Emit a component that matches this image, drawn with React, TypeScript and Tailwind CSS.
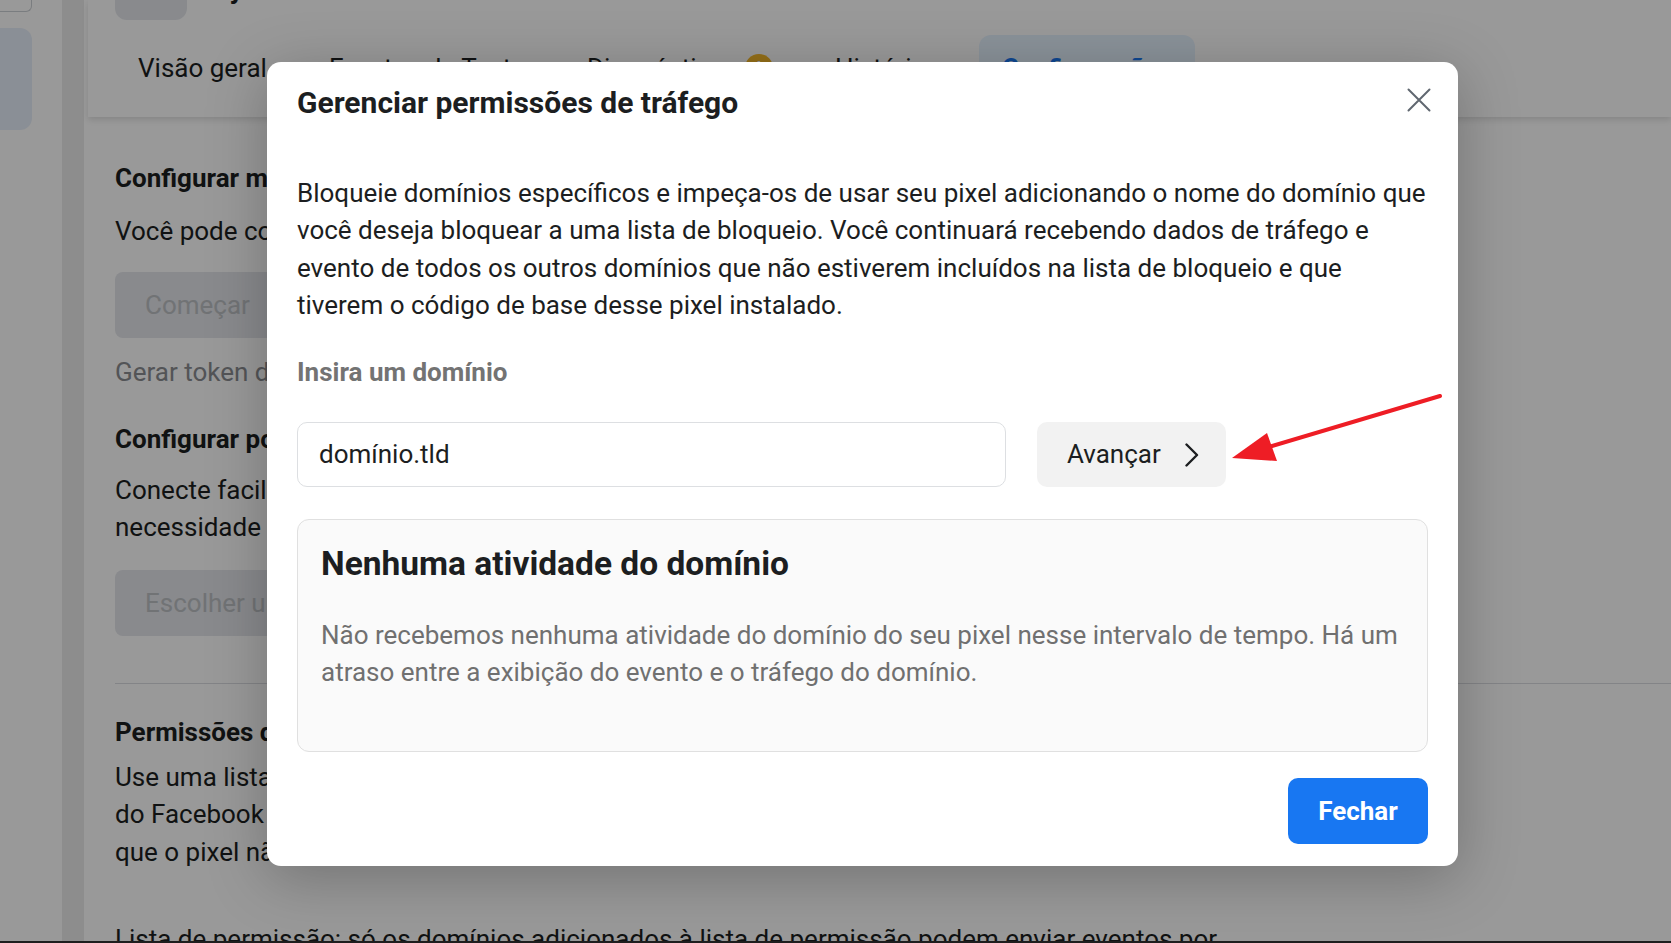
const tabs = [
  { label: "Visão geral" },
  { label: "Eventos de Teste" },
  { label: "Diagnóstico", badge: true },
  { label: "Histórico" },
  { label: "Configurações", active: true },
];

function Page() {
  return (
    <div className="flex h-full w-full">
      {/* left rail */}
      <div className="w-[62px] bg-white">
        <div className="h-[12px] w-[32px] rounded-br-md border-r border-b border-[#ccd0d5]" />
        <div className="mt-[16px] h-[102px] w-[32px] rounded-r-xl bg-[#e7effa]" />
      </div>
      <div className="w-[22px] bg-[#ebebeb]" />

      <div className="flex min-w-0 flex-1 flex-col bg-white pl-[4px]">
        {/* header with tabs */}
        <div className="flex h-[117px] shrink-0 flex-col bg-white shadow-[0_3px_6px_rgba(0,0,0,0.12)]">
          <div className="-mt-[30px] flex h-[50px] items-end pl-[27px]">
            <div className="h-[50px] w-[72px] rounded-xl bg-[#e4e6eb]" />
            <span className="mb-[17px] ml-[18px] text-[28px] leading-none font-bold text-[#1c1e21]">My Pixel</span>
          </div>
          <div className="mt-[15px] flex items-center gap-[16px] pl-[27px]">
            {tabs.map((t) => (
              <div
                key={t.label}
                className={
                  t.active
                    ? "flex h-[66px] items-center rounded-xl bg-[#e7f3ff] px-[23px] text-[26px] font-bold text-[#1877f2]"
                    : "flex h-[66px] items-center px-[23px] text-[26px] text-[#1c1e21]"
                }
              >
                {t.label}
                {t.badge && (
                  <span className="ml-[20px] flex h-[28px] w-[28px] items-center justify-center rounded-full bg-[#f7b928] text-[16px] font-bold text-white">
                    !
                  </span>
                )}
              </div>
            ))}
          </div>
        </div>

        {/* settings content */}
        <div className="pt-[45px] pl-[27px] text-[26px] text-[#1c1e21]">
          <h3 className="leading-[32px] font-bold">Configurar manualmente a API de Conversões</h3>
          <p className="mt-[21px] leading-[32px]">Você pode configurar a API de Conversões por conta própria.</p>
          <button className="mt-[25px] flex h-[66px] items-center rounded-lg bg-[#e4e6eb] px-[30px] text-[#bcc0c4]">
            Começar
          </button>
          <p className="mt-[18px] leading-[32px] text-[#8a8d91]">Gerar token de acesso</p>

          <h3 className="mt-[35px] leading-[32px] font-bold">Configurar por meio de um parceiro</h3>
          <p className="mt-[17px] leading-[37px]">
            Conecte facilmente seu site à API de Conversões usando um parceiro, sem a
            <br />
            necessidade de um desenvolvedor.
          </p>
          <button className="mt-[24px] flex h-[66px] items-center rounded-lg bg-[#e4e6eb] px-[30px] text-[#bcc0c4]">
            Escolher um parceiro
          </button>

          <div className="mt-[47px] h-px bg-[#dadde1]" />

          <h3 className="mt-[32px] leading-[32px] font-bold">Permissões de tráfego</h3>
          <p className="mt-[11px] leading-[37.3px]">
            Use uma lista de permissão ou de bloqueio para controlar quais domínios
            <br />
            do Facebook podem receber eventos do seu pixel. Os domínios bloqueados
            <br />
            que o pixel não reconhece.
          </p>
          <p className="mt-[50px] leading-[37px]">
            Lista de permissão: só os domínios adicionados à lista de permissão podem enviar eventos por
          </p>
        </div>
      </div>
    </div>
  );
}

function RedArrow() {
  return (
    <svg
      className="absolute top-[387px] left-[1225px]"
      width="225"
      height="80"
      viewBox="0 0 225 80"
      fill="none"
    >
      <line x1="215" y1="9" x2="44" y2="60" stroke="#ee1d25" strokeWidth="4" strokeLinecap="round" />
      <polygon points="7,71 42,46 52,74" fill="#ee1d25" />
    </svg>
  );
}

export default function App() {
  return (
    <div className="relative h-[943px] w-[1671px] overflow-hidden bg-white font-['Roboto',sans-serif]">
      <Page />

      <div className="absolute inset-0 bg-black/40" />

      {/* modal */}
      <div className="absolute top-[62px] left-[267px] w-[1191px] rounded-[14px] bg-white px-[30px] pt-[25px] pb-[22px] shadow-[0_12px_60px_rgba(0,0,0,0.25)]">
        <div className="flex items-center justify-between">
          <h2 className="text-[30px] leading-[32px] font-bold text-[#1c1e21]">Gerenciar permissões de tráfego</h2>
          <button className="-mt-[6px] -mr-[3px]">
            <svg width="24" height="24" viewBox="0 0 24 24" fill="none">
              <path d="M1.5 1.5 22.5 22.5 M22.5 1.5 1.5 22.5" stroke="#606770" strokeWidth="2" strokeLinecap="round" />
            </svg>
          </button>
        </div>

        <p className="mt-[56px] text-[26px] leading-[37.3px] text-[#1c1e21]">
          Bloqueie domínios específicos e impeça-os de usar seu pixel adicionando o nome do domínio que você
          deseja bloquear a uma lista de bloqueio. Você continuará recebendo dados de tráfego e evento de todos
          os outros domínios que não estiverem incluídos na lista de bloqueio e que tiverem o código de base
          desse pixel instalado.
        </p>

        <label className="mt-[33px] block text-[26px] leading-[30px] font-bold text-[#737373]">Insira um domínio</label>

        <div className="mt-[35px] flex gap-[31px]">
          <div className="flex h-[65px] w-[709px] items-center rounded-[10px] border border-[#dddfe2] px-[21px] text-[26px] text-[#1c1e21]">
            domínio.tld
          </div>
          <button className="flex h-[65px] w-[189px] items-center rounded-[10px] bg-[#f2f2f2] pr-[27px] pl-[30px] text-[26px] text-[#1c1e21]">
            <span>Avançar</span>
            <svg className="ml-auto" width="14" height="24" viewBox="0 0 14 24" fill="none">
              <path d="M1.5 1.5 12 12 1.5 22.5" stroke="#1c1e21" strokeWidth="2.4" strokeLinecap="round" strokeLinejoin="round" />
            </svg>
          </button>
        </div>

        <div className="mt-[32px] h-[233px] rounded-[12px] border border-[#e0e0e0] bg-[#fafafa] px-[23px] pt-[26px]">
          <h3 className="text-[33.5px] leading-[36px] font-bold text-[#1c1e21]">Nenhuma atividade do domínio</h3>
          <p className="mt-[35px] text-[26px] leading-[37px] text-[#707070]">
            Não recebemos nenhuma atividade do domínio do seu pixel nesse intervalo de tempo. Há um atraso entre a
            exibição do evento e o tráfego do domínio.
          </p>
        </div>

        <div className="mt-[26px] flex justify-end">
          <button className="h-[66px] w-[140px] rounded-[10px] bg-[#1877f2] text-[26px] font-bold text-white">
            Fechar
          </button>
        </div>
      </div>

      <RedArrow />

      <div className="absolute bottom-0 left-0 h-[2px] w-full bg-[#1e1e1e]" />
    </div>
  );
}
